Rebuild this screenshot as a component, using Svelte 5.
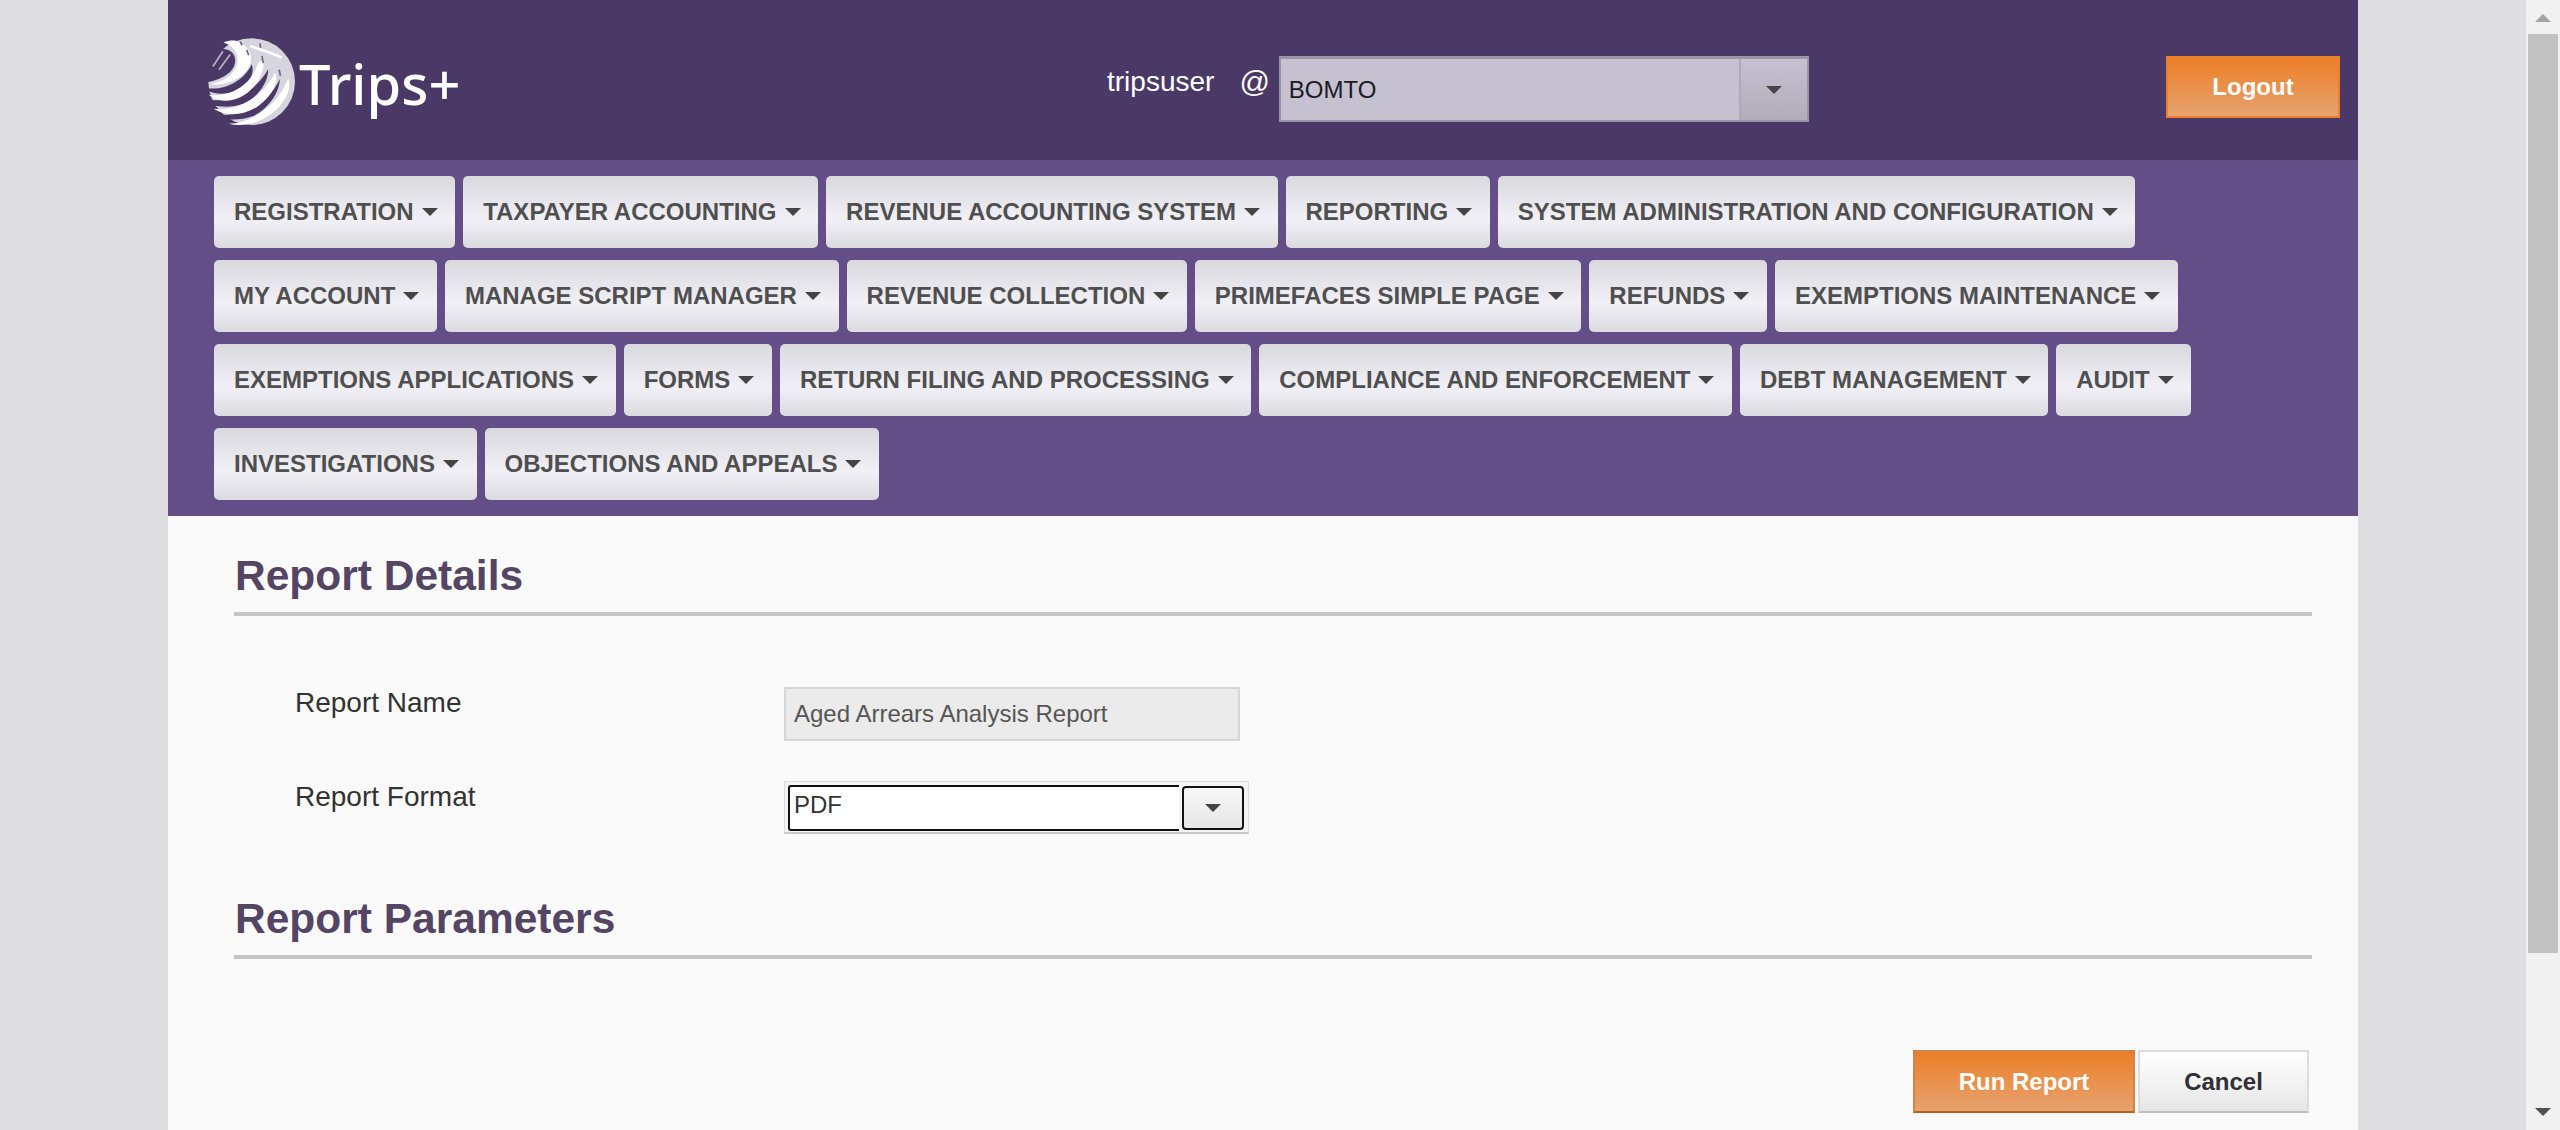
<script>
  const menuRows = [
    ['REGISTRATION', 'TAXPAYER ACCOUNTING', 'REVENUE ACCOUNTING SYSTEM', 'REPORTING', 'SYSTEM ADMINISTRATION AND CONFIGURATION'],
    ['MY ACCOUNT', 'MANAGE SCRIPT MANAGER', 'REVENUE COLLECTION', 'PRIMEFACES SIMPLE PAGE', 'REFUNDS', 'EXEMPTIONS MAINTENANCE'],
    ['EXEMPTIONS APPLICATIONS', 'FORMS', 'RETURN FILING AND PROCESSING', 'COMPLIANCE AND ENFORCEMENT', 'DEBT MANAGEMENT', 'AUDIT'],
    ['INVESTIGATIONS', 'OBJECTIONS AND APPEALS']
  ];
</script>

<div class="page">
  <div class="gutter"></div>
  <main class="shell">
    <header class="topbar">
      <div class="brand">
        <svg class="globe" viewBox="25 20 262 278" aria-hidden="true">
          <circle cx="155" cy="158" r="131" fill="#d6d4dd" />
          <path d="M30 70C70 50 100 60 105 90C108 125 70 150 20 160C15 130 15 100 30 70Z" fill="#4a3966" />
          <path d="M20 178C80 185 135 150 155 105C165 130 150 165 110 185C75 200 40 195 20 185Z" fill="#4a3966" />
          <path d="M20 212C100 225 170 185 205 120C205 160 175 205 130 225C95 238 60 235 30 228Z" fill="#4a3966" />
          <path d="M50 258C130 265 205 225 240 150C240 190 205 240 160 262C125 275 90 275 60 268Z" fill="#4a3966" />
          <path d="M110 35C155 55 165 90 140 125C115 155 70 172 28 165C70 160 105 135 112 100C116 75 100 50 70 40C85 33 98 33 110 35Z" fill="#fff" />
          <path d="M25 198C85 205 140 175 165 125C175 100 178 95 190 95C195 130 170 175 130 200C95 222 55 220 25 198Z" fill="#fff" />
          <path d="M40 240C110 250 190 205 225 130C240 155 215 205 170 235C130 260 80 265 40 240Z" fill="#fff" />
          <path d="M85 285C150 285 230 235 265 150C280 180 250 235 205 262C170 285 125 295 85 285Z" fill="#fff" />
          <path d="M150 50C180 60 215 70 245 85" fill="none" stroke="#fff" stroke-width="8" />
          <path d="M120 36l6 12M180 42l2 14M140 62l6 16M186 80l4 22M238 122l4 18" fill="none" stroke="#6f6288" stroke-width="5" />
          <path d="M38 112L68 66M56 122L90 76" fill="none" stroke="#b9b4c6" stroke-width="5" />
        </svg>
        <span class="wordmark">Trips+</span>
      </div>
      <div class="session">
        <span class="user">tripsuser</span>
        <span class="at">@</span>
        <div class="office">
          <span class="office-value">BOMTO</span>
          <span class="office-arrow"><i class="caret"></i></span>
        </div>
      </div>
      <button class="btn-logout">Logout</button>
    </header>

    <nav class="menu">
      {#each menuRows as row}
        <div class="menu-row">
          {#each row as item}
            <button class="menu-item">{item}<i class="caret"></i></button>
          {/each}
        </div>
      {/each}
    </nav>

    <section class="content">
      <h2 class="section-title first">Report Details</h2>
      <div class="form">
        <div class="form-label">Report Name</div>
        <div class="readonly">Aged Arrears Analysis Report</div>
        <div class="form-label">Report Format</div>
        <div class="format">
          <span class="format-value">PDF</span>
          <span class="format-arrow"><i class="caret"></i></span>
        </div>
      </div>
      <h2 class="section-title">Report Parameters</h2>
      <div class="actions">
        <button class="btn-run">Run Report</button>
        <button class="btn-cancel">Cancel</button>
      </div>
    </section>
  </main>
  <div class="gutter"></div>
  <div class="scrollbar">
    <i class="sb-up"></i>
    <div class="sb-thumb"></div>
    <i class="sb-down"></i>
  </div>
</div>

<style>
  :global(body) {
    margin: 0;
    background: #dedee0;
    overflow: hidden;
  }

  .page {
    display: flex;
    height: 1130px;
    overflow: hidden;
    font-family: "Liberation Sans", Arial, sans-serif;
  }

  .gutter {
    width: 168px;
    flex: none;
  }

  .shell {
    width: 2190px;
    flex: none;
    background: #fafafa;
  }

  .topbar {
    height: 160px;
    background: #4a3966;
    display: flex;
    align-items: flex-start;
    padding: 0 18px 0 40px;
    box-sizing: border-box;
  }

  .brand {
    display: flex;
    align-items: center;
    width: 899px;
    flex: none;
    margin-top: 36px;
  }

  .globe {
    width: 88px;
    height: 92px;
    flex: none;
  }

  .wordmark {
    font-family: "Noto Sans", sans-serif;
    font-size: 56px;
    font-weight: 500;
    color: #fff;
    margin-left: 3px;
    line-height: 1;
    margin-top: 2px;
  }

  .session {
    display: flex;
    align-items: center;
    color: #fff;
    font-size: 28px;
    margin-top: 56px;
  }

  .user {
    margin-top: -14px;
  }

  .at {
    font-size: 30px;
    margin: -14px 9px 0 25px;
  }

  .office {
    width: 530px;
    height: 66px;
    box-sizing: border-box;
    display: flex;
    background: #c5c1d0;
    border: 2px solid #9b95a9;
    border-top-width: 3px;
  }

  .office-value {
    flex: 1;
    padding-left: 8px;
    font-size: 24px;
    color: #1c1a22;
    line-height: 62px;
  }

  .office-arrow {
    width: 66px;
    border-left: 2px solid #aea9b9;
    background: linear-gradient(#c5c1d0, #b0acba);
    display: flex;
    align-items: center;
    justify-content: center;
  }

  .caret {
    display: inline-block;
    width: 0;
    height: 0;
    border-left: 8px solid transparent;
    border-right: 8px solid transparent;
    border-top: 8px solid #444;
  }

  .btn-logout {
    width: 174px;
    height: 62px;
    margin: 56px 0 0 auto;
    border: 2px solid #ec7f28;
    background: linear-gradient(#ec7f28, #e6a26f);
    color: #fff;
    font: bold 24px "Liberation Sans", Arial, sans-serif;
    padding: 0;
  }

  .menu {
    height: 356px;
    box-sizing: border-box;
    background: #634e87;
    padding: 16px 0 0 46px;
    display: flex;
    flex-direction: column;
    gap: 12px;
  }

  .menu-row {
    display: flex;
    gap: 8px;
  }

  .menu-item {
    height: 72px;
    padding: 0 17.6px 0 20px;
    border: none;
    border-radius: 5px;
    background: linear-gradient(#d9d8dd 0%, #f1f0f6 60%, #dbdadf 100%);
    color: #4f4f4f;
    font: bold 24px "Liberation Sans", Arial, sans-serif;
    display: flex;
    align-items: center;
    white-space: nowrap;
  }

  .menu-item .caret {
    margin-left: 8px;
  }

  .content {
    padding: 0 46px 0 66px;
  }

  .section-title {
    margin: 0;
    height: 80px;
    box-sizing: border-box;
    border-bottom: 4px solid #c4c4c4;
    color: #544565;
    font-size: 42.5px;
    font-weight: bold;
    padding: 0 0 0 1px;
    line-height: 80px;
  }

  .section-title.first {
    margin-top: 20px;
  }

  .form {
    display: grid;
    grid-template-columns: 489px 1fr;
    grid-template-rows: 54px 53px;
    row-gap: 40px;
    padding: 71px 0 0 61px;
    margin-bottom: 45px;
    align-items: start;
  }

  .form-label {
    font-size: 28px;
    color: #333;
    line-height: 30px;
    margin-top: 1px;
  }

  .readonly {
    width: 456px;
    height: 54px;
    box-sizing: border-box;
    background: #ebebeb;
    border: 2px solid #d6d6d6;
    color: #555;
    font-size: 24px;
    line-height: 50px;
    padding-left: 8px;
  }

  .format {
    width: 465px;
    height: 53px;
    box-sizing: border-box;
    background: #f4f4f4;
    border: 1px solid #dcdcdc;
    border-bottom: 2px solid #c8c8c8;
    display: flex;
    padding: 3px 4px 1px 3px;
    gap: 3px;
  }

  .format-value {
    width: 391px;
    height: 46px;
    box-sizing: border-box;
    background: #fff;
    border: 2px solid #111;
    border-right: none;
    border-radius: 3px 0 0 3px;
    font-size: 24px;
    color: #333;
    padding-left: 4px;
    line-height: 36px;
  }

  .format-arrow {
    width: 62px;
    height: 44px;
    margin-top: 1px;
    box-sizing: border-box;
    border: 2px solid #111;
    border-radius: 4px;
    background: linear-gradient(#f8f8f8, #e6e6e6);
    display: flex;
    align-items: center;
    justify-content: center;
  }

  .actions {
    display: flex;
    justify-content: flex-end;
    gap: 3px;
    margin-top: 91px;
    padding-right: 3px;
  }

  .btn-run,
  .btn-cancel {
    height: 63px;
    padding: 0;
    font: bold 24px "Liberation Sans", Arial, sans-serif;
  }

  .btn-run {
    width: 222px;
    color: #fff;
    background: linear-gradient(#ec7f28, #e6a26f);
    border: 2px solid #d0834c;
    border-bottom-color: #b5621f;
  }

  .btn-cancel {
    width: 171px;
    color: #2f2f35;
    background: linear-gradient(#fff, #e6e6e6);
    border: 2px solid #dcdcdc;
    border-bottom-color: #bdbdbd;
  }

  .scrollbar {
    position: absolute;
    top: 0;
    right: 0;
    bottom: 0;
    width: 34px;
    background: #f1f1f1;
  }

  .sb-thumb {
    position: absolute;
    top: 34px;
    left: 2px;
    width: 30px;
    height: 919px;
    background: #c1c1c1;
  }

  .sb-up,
  .sb-down {
    position: absolute;
    left: 9px;
    width: 0;
    height: 0;
    border-left: 8px solid transparent;
    border-right: 8px solid transparent;
  }

  .sb-up {
    top: 14px;
    border-bottom: 8px solid #a3a3a3;
  }

  .sb-down {
    bottom: 14px;
    border-top: 8px solid #505050;
  }
</style>
